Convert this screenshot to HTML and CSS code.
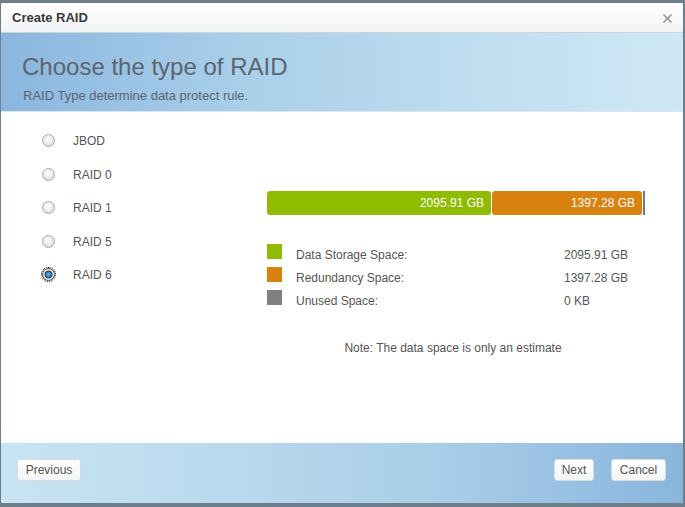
FILE: index.html
```html
<!DOCTYPE html>
<html>
<head>
<meta charset="utf-8">
<link rel="stylesheet" href="styles.css">
</head>
<body>
<div class="dialog">
  <div class="titlebar">
    <span class="title">Create RAID</span>
    <svg class="close" width="9" height="9" viewBox="0 0 9 9"><path d="M0.5 0.5L8.5 8.5M8.5 0.5L0.5 8.5" stroke="#888" stroke-width="1.3"/></svg>
  </div>
  <div class="banner">
    <h1>Choose the type of RAID</h1>
    <p>RAID Type determine data protect rule.</p>
  </div>
  <div class="content">
    <ul class="types">
      <li><input type="radio" name="raid" class="radio"><span>JBOD</span></li>
      <li><input type="radio" name="raid" class="radio"><span>RAID 0</span></li>
      <li><input type="radio" name="raid" class="radio"><span>RAID 1</span></li>
      <li><input type="radio" name="raid" class="radio"><span>RAID 5</span></li>
      <li><input type="radio" name="raid" class="radio selected" checked><span>RAID 6</span></li>
    </ul>
    <div class="space">
      <div class="bar">
        <div class="seg seg-data" style="width:224px">2095.91 GB</div>
        <div class="seg seg-red" style="width:150px">1397.28 GB</div>
        <div class="seg seg-unused"></div>
      </div>
      <div class="legend">
        <span class="sq sq-data"></span><span class="lbl">Data Storage Space:</span><span class="val">2095.91 GB</span>
        <span class="sq sq-red"></span><span class="lbl">Redundancy Space:</span><span class="val">1397.28 GB</span>
        <span class="sq sq-unused"></span><span class="lbl">Unused Space:</span><span class="val">0 KB</span>
      </div>
      <p class="note">Note: The data space is only an estimate</p>
    </div>
  </div>
  <div class="footer">
    <button class="btn btn-prev">Previous</button>
    <div class="right">
      <button class="btn btn-next">Next</button>
      <button class="btn btn-cancel">Cancel</button>
    </div>
  </div>
</div>
</body>
</html>
```

FILE: styles.css
```css
html, body {
  margin: 0;
  padding: 0;
}
body {
  background: #6c7f8b;
  font-family: "Liberation Sans", Arial, sans-serif;
  color: #555;
  width: 685px;
  height: 507px;
  overflow: hidden;
}
.dialog {
  margin: 3px 0 0 1px;
  width: 682px;
  height: 500px;
  background: #fff;
  display: flex;
  flex-direction: column;
  border-radius: 2px;
  overflow: hidden;
}
.titlebar {
  height: 29px;
  flex: none;
  border-bottom: 1px solid #cbd5dc;
  background: linear-gradient(#ffffff, #f2f3f4);
  display: flex;
  align-items: center;
  justify-content: space-between;
  padding: 0 11px 0 11px;
}
.title {
  font-size: 13px;
  font-weight: bold;
  color: #3a3a3a;
}
.close {
  margin-top: 2px;
}
.banner {
  height: 79px;
  flex: none;
  box-sizing: border-box;
  padding: 20px 0 0 21px;
  background: linear-gradient(90deg, #8ab6de 0%, #a9cfe9 35%, #bcdcef 65%, #d0e8f5 100%);
  border-bottom: 1px solid #dce6ec;
}
.banner h1 {
  margin: 0;
  font-size: 24px;
  font-weight: normal;
  color: #5b6570;
  line-height: 28px;
}
.banner p {
  margin: 7px 0 0 1px;
  font-size: 13px;
  color: #5b6570;
  line-height: 15px;
}
.content {
  flex: 1;
  display: flex;
}
.types {
  list-style: none;
  margin: 0;
  padding: 12px 0 0 41px;
  width: 225px;
}
.types li {
  height: 33.5px;
  display: flex;
  align-items: center;
  font-size: 12px;
  color: #555;
}
.radio {
  appearance: none;
  -webkit-appearance: none;
  margin: 0 18px 0 0;
  width: 13px;
  height: 13px;
  border-radius: 50%;
  border: 1px solid #a9a9a9;
  box-sizing: border-box;
  background: radial-gradient(circle at 45% 40%, #ffffff 0%, #ececec 45%, #cfcfcf 100%);
}
.radio.selected {
  background: radial-gradient(circle at 50% 50%, #6fb6e6 0, #2e7cb8 2.5px, #123a5c 3.6px, #e8e8e8 4.3px, #cfcfcf 100%);
  border-color: #5a5a5a;
  outline: 1px dotted #000;
  outline-offset: 0;
}
.types span {
  margin-top: 1px;
}
.space {
  padding-top: 79px;
  width: 378px;
}
.bar {
  display: flex;
  height: 24px;
  gap: 1px;
}
.seg {
  height: 24px;
  box-sizing: border-box;
  border-radius: 3px;
  color: #fff;
  font-size: 12px;
  line-height: 24px;
  text-align: right;
  padding-right: 7px;
}
.seg-data { background: #8fbc00; }
.seg-red { background: #d8820f; }
.seg-unused {
  width: 2px;
  padding: 0;
  border-radius: 0;
  background: #7a7a7a;
}
.legend {
  margin-top: 29px;
  display: grid;
  grid-template-columns: 29px 268px auto;
  grid-auto-rows: 23px;
  align-items: center;
  font-size: 12px;
  color: #555;
}
.sq {
  width: 15px;
  height: 15px;
  align-self: start;
}
.sq-data { background: #8fbc00; }
.sq-red { background: #d8820f; }
.sq-unused { background: #808080; }
.lbl, .val {
  align-self: start;
  line-height: 15px;
  margin-top: 4px;
}
.note {
  margin: 28px 0 0 0;
  text-align: center;
  font-size: 12px;
  line-height: 14px;
  color: #555;
  padding-right: 6px;
}
.footer {
  height: 60px;
  flex: none;
  box-sizing: border-box;
  padding: 16px 17px 0 16px;
  display: flex;
  justify-content: space-between;
  align-items: flex-start;
  background: linear-gradient(90deg, #c9e4f3 0%, #b8d9ee 35%, #a9cde8 65%, #89b5dd 100%);
}
.right {
  display: flex;
  gap: 17px;
}
.btn {
  height: 22px;
  box-sizing: border-box;
  border: 1px solid #d6dde2;
  border-radius: 3px;
  background: linear-gradient(#ffffff, #f3f4f5);
  font-family: "Liberation Sans", Arial, sans-serif;
  font-size: 12px;
  color: #555;
  padding: 0;
  margin: 0;
}
.btn-prev { width: 64px; }
.btn-next { width: 40px; }
.btn-cancel { width: 55px; }
```
